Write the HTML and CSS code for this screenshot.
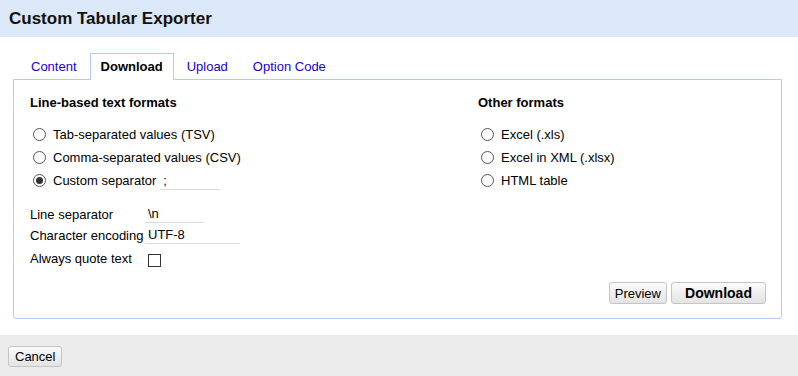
FILE: index.html
```html
<!DOCTYPE html>
<html lang="en">
<head>
    <meta charset="UTF-8">
    <title>Custom Tabular Exporter</title>
    <link rel="stylesheet" href="styles.css">
</head>
<body>
    <div class="dialog-header">Custom Tabular Exporter</div>

    <div class="dialog-body">
        <ul class="tabs">
            <li class="tab"><a href="#">Content</a></li>
            <li class="tab active"><a href="#">Download</a></li>
            <li class="tab"><a href="#">Upload</a></li>
            <li class="tab"><a href="#">Option Code</a></li>
        </ul>

        <div class="panel">
            <div class="columns">
                <div class="col col-left">
                    <h3 class="section-title">Line-based text formats</h3>
                    <label class="radio-row"><input type="radio" name="format"> Tab-separated values (TSV)</label>
                    <label class="radio-row"><input type="radio" name="format"> Comma-separated values (CSV)</label>
                    <label class="radio-row"><input type="radio" name="format" checked> Custom separator
                        <input type="text" class="line-input sep-input" value=";"></label>

                    <table class="options">
                        <tr class="opt-row-1">
                            <td class="opt-label">Line separator</td>
                            <td><input type="text" class="line-input short-input" value="\n"></td>
                        </tr>
                        <tr class="opt-row-2">
                            <td class="opt-label">Character encoding</td>
                            <td><input type="text" class="line-input enc-input" value="UTF-8"></td>
                        </tr>
                        <tr>
                            <td class="opt-label">Always quote text</td>
                            <td><input type="checkbox" class="check"></td>
                        </tr>
                    </table>
                </div>
                <div class="col col-right">
                    <h3 class="section-title">Other formats</h3>
                    <label class="radio-row"><input type="radio" name="format"> Excel (.xls)</label>
                    <label class="radio-row"><input type="radio" name="format"> Excel in XML (.xlsx)</label>
                    <label class="radio-row"><input type="radio" name="format"> HTML table</label>
                </div>
            </div>

            <div class="panel-buttons">
                <button class="button">Preview</button>
                <button class="button button-main">Download</button>
            </div>
        </div>
    </div>

    <div class="dialog-footer">
        <button class="button">Cancel</button>
    </div>
</body>
</html>
```

FILE: styles.css
```css
body {
    margin: 0;
    background: #fff;
    font-family: "Liberation Sans", Arial, sans-serif;
    font-size: 13px;
    color: #000;
}
.dialog-header {
    height: 37px;
    line-height: 37px;
    padding-left: 9px;
    background: #dbe8f9;
    font-size: 17px;
    font-weight: bold;
    color: #111;
}
.dialog-body {
    padding: 16px 16px 16px 13px;
}
.tabs {
    display: flex;
    gap: 1px;
    list-style: none;
    margin: 0;
    padding: 0 0 0 6px;
}
.tab {
    height: 26px;
    margin-bottom: -1px;
    border: 1px solid transparent;
    border-bottom: none;
    box-sizing: border-box;
    position: relative;
}
.tab a {
    display: block;
    padding: 0 11px;
    line-height: 26px;
    color: #2200cc;
    text-decoration: none;
}
.tab.active {
    border-color: #b6cbf3;
    background: #fff;
    z-index: 1;
    height: 27px;
}
.tab.active a {
    color: #000;
    font-weight: bold;
    padding: 0 10px;
}
.panel {
    height: 240px;
    box-sizing: border-box;
    border: 1px solid #b6cbf3;
    border-radius: 0 0 3px 3px;
    padding: 15px 15px 14px 16px;
    display: flex;
    flex-direction: column;
}
.columns {
    display: flex;
}
.col-left {
    width: 448px;
}
.section-title {
    margin: 0 0 12px 0;
    font-size: 13px;
    line-height: 16px;
    font-weight: bold;
}
.radio-row {
    display: flex;
    align-items: center;
    height: 23px;
}
.radio-row input[type="radio"] {
    appearance: none;
    width: 13px;
    height: 13px;
    margin: 0 7px 0 3px;
    border: 1px solid #555;
    border-radius: 50%;
    box-sizing: border-box;
    background: #fff;
    display: grid;
    place-items: center;
}
.radio-row input[type="radio"]:checked::after {
    content: "";
    width: 7px;
    height: 7px;
    border-radius: 50%;
    background: #333;
}
.line-input {
    border: none;
    border-bottom: 1px solid #dcdcdc;
    font-family: inherit;
    font-size: 13px;
    padding: 0 3px 1px 3px;
    outline: none;
    color: #000;
}
.sep-input {
    width: 54px;
    margin-left: 4px;
    margin-top: 2px;
}
.options {
    border-collapse: collapse;
    margin-top: 12px;
}
.options td {
    padding: 0;
    height: 23px;
}
.opt-row-1 td {
    height: 20px;
}
.opt-label {
    width: 115px;
}
.short-input {
    width: 53px;
}
.enc-input {
    width: 89px;
}
.check {
    appearance: none;
    width: 13px;
    height: 13px;
    margin: 4px 0 0 3px;
    border: 1px solid #333;
    box-sizing: border-box;
    background: #fff;
    display: block;
}
.panel-buttons {
    margin-top: auto;
    display: flex;
    justify-content: flex-end;
    gap: 4px;
}
.button {
    font-family: inherit;
    font-size: 13px;
    height: 22px;
    padding: 0 5px;
    border: 1px solid #c4c4c4;
    border-radius: 3px;
    background: linear-gradient(#fbfbfb, #e3e3e3);
    color: #000;
    cursor: pointer;
}
.button-main {
    width: 95px;
    font-weight: bold;
    font-size: 14px;
}
.dialog-footer {
    background: #ececec;
    padding: 11px 8px 12px 8px;
    height: 41px;
    box-sizing: border-box;
}
.dialog-footer .button {
    height: 21px;
    padding: 0 6px;
}
```
